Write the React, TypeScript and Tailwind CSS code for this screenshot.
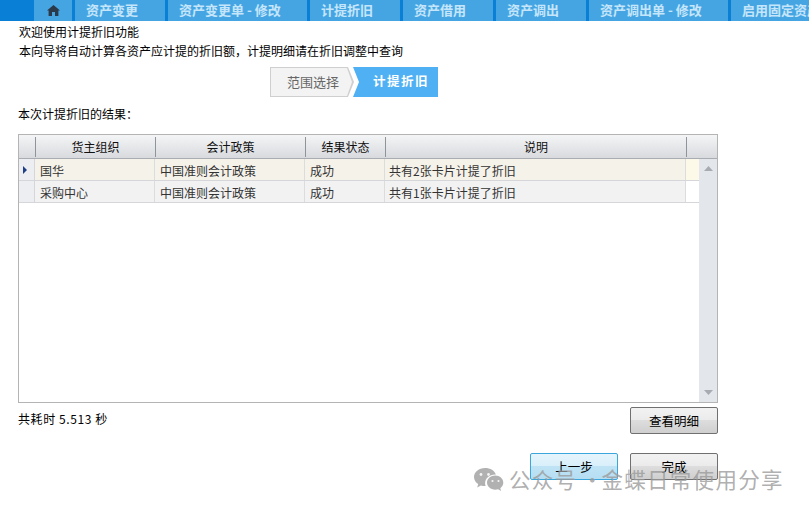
const font = { fontFamily: '"Noto Sans CJK SC", sans-serif' }

const tabs = [
  { label: '资产变更', w: 'w-[90px]' },
  { label: '资产变更单 - 修改', w: 'w-[139px]' },
  { label: '计提折旧', w: 'w-[90px]' },
  { label: '资产借用', w: 'w-[90px]' },
  { label: '资产调出', w: 'w-[90px]' },
  { label: '资产调出单 - 修改', w: 'w-[139px]' },
  { label: '启用固定资产', w: 'w-[78px]' },
]

const rows = [
  { org: '国华', policy: '中国准则会计政策', status: '成功', note: '共有2张卡片计提了折旧', active: true },
  { org: '采购中心', policy: '中国准则会计政策', status: '成功', note: '共有1张卡片计提了折旧', active: false },
]

function GridButton({ label, focus }: { label: string; focus?: boolean }) {
  return (
    <button
      className={
        'w-[88px] h-[27px] pt-[1px] rounded-[2px] border text-[12.5px] text-black ' +
        (focus
          ? 'border-[#3aa6dc] bg-[linear-gradient(#e6f5fd_0%,#d8effa_48%,#bfe3f5_50%,#b5def3_100%)]'
          : 'border-[#707070] bg-[linear-gradient(#f2f2f2_0%,#ebebeb_48%,#dddddd_50%,#cfcfcf_100%)]')
      }
    >
      {label}
    </button>
  )
}

export default function App() {
  return (
    <div style={font} className="relative w-[809px] h-[511px] overflow-hidden bg-white text-[12px] text-black">
      {/* top tabs */}
      <div className="flex h-[21px] bg-[#0a7fd6] pl-[34px] gap-[3px] overflow-hidden">
        <div className="w-[38px] shrink-0 bg-[#45a5e3] flex items-center justify-center">
          <svg width="13" height="11" viewBox="0 0 13 11" fill="#2b3a4a">
            <path d="M6.5 0 L13 5.6 L11.4 5.6 L11.4 11 L8 11 L8 7 L5 7 L5 11 L1.6 11 L1.6 5.6 L0 5.6 Z" />
          </svg>
        </div>
        {tabs.map((t) => (
          <div
            key={t.label}
            className={t.w + ' shrink-0 bg-[#45a5e3] pl-[11px] text-[13px] font-bold leading-[20px] text-[#c5e6fa] whitespace-nowrap overflow-hidden'}
          >
            {t.label}
          </div>
        ))}
      </div>

      {/* intro */}
      <div className="pl-[19px] pt-[1px] leading-[19px]">
        <p>欢迎使用计提折旧功能</p>
        <p>本向导将自动计算各资产应计提的折旧额，计提明细请在折旧调整中查询</p>
      </div>

      {/* steps */}
      <div className="flex pl-[270px] mt-[7px] h-[30px]">
        <div className="w-[84px] h-full bg-[#cfcfcf] [clip-path:polygon(0_0,78px_0,84px_15px,78px_100%,0_100%)]">
          <div className="m-[1px] w-[81px] h-[28px] bg-[#f3f3f3] text-[#666] text-[13px] leading-[27px] pl-[16px] [clip-path:polygon(0_0,76px_0,81px_14px,76px_100%,0_100%)]">
            范围选择
          </div>
        </div>
        <div className="w-[85px] -ml-[1px] h-full bg-[#4fb1f3] text-white font-bold text-[12.5px] leading-[28px] pl-[20px] tracking-[1.5px] [clip-path:polygon(0_0,100%_0,100%_100%,0_100%,6px_15px)]">
          计提折旧
        </div>
      </div>

      <p className="pl-[18px] mt-[7px] leading-[20px]">本次计提折旧的结果：</p>

      {/* grid */}
      <div className="ml-[18px] mt-[10px] w-[700px] h-[269px] border border-[#b4b4b4] flex flex-col">
        <div className="flex h-[24px] shrink-0 border-b border-[#a9adb3] bg-[linear-gradient(#f4f5f6,#d8dade)] items-center text-center text-[#111]">
          <div className="w-[16px]" />
          <div className="w-[120px] h-[20px] leading-[20px] border-l border-[#8f949a]">货主组织</div>
          <div className="w-[150px] h-[20px] leading-[20px] border-l border-[#8f949a]">会计政策</div>
          <div className="w-[80px] h-[20px] leading-[20px] border-l border-[#8f949a]">结果状态</div>
          <div className="w-[301px] h-[20px] leading-[20px] border-l border-[#8f949a]">说明</div>
          <div className="flex-1 h-[20px] border-l border-[#8f949a]" />
        </div>
        <div className="flex flex-1 min-h-0">
          <div className="flex-1">
            {rows.map((r) => (
              <div key={r.org} className="flex h-[22px] border-b border-[#d4d6d9] leading-[23px] text-[#333]">
                <div className="w-[16px] flex items-center justify-center bg-[#eceef1] border-r border-[#d4d6d9]">
                  {r.active && (
                    <svg width="4" height="8" viewBox="0 0 4 8" className="ml-[-3px]">
                      <path d="M0 0 L4 4 L0 8 Z" fill="#1f3f86" />
                    </svg>
                  )}
                </div>
                <div className={'w-[120px] pl-[5px] border-r border-[#dcdcdc] ' + (r.active ? 'bg-[#f5f2ea]' : 'bg-[#f2f2f2]')}>{r.org}</div>
                <div className={'w-[150px] pl-[5px] border-r border-[#dcdcdc] ' + (r.active ? 'bg-[#f5f2ea]' : 'bg-[#f2f2f2]')}>{r.policy}</div>
                <div className={'w-[80px] pl-[5px] border-r border-[#dcdcdc] ' + (r.active ? 'bg-[#f5f2ea]' : 'bg-[#f2f2f2]')}>{r.status}</div>
                <div className={'w-[301px] pl-[4px] border-r border-[#dcdcdc] ' + (r.active ? 'bg-[#f5f2ea]' : 'bg-[#f2f2f2]')}>{r.note}</div>
                <div className={'flex-1 ' + (r.active ? 'bg-[#fdf9e8]' : 'bg-white')} />
              </div>
            ))}
          </div>
          <div className="w-[18px] shrink-0 bg-[#e3e6ea] flex flex-col justify-between items-center py-[7px]">
            <svg width="9" height="5" viewBox="0 0 9 5"><path d="M0 5 L4.5 0 L9 5 Z" fill="#a8acb2" /></svg>
            <svg width="9" height="5" viewBox="0 0 9 5"><path d="M0 0 L4.5 5 L9 0 Z" fill="#a8acb2" /></svg>
          </div>
        </div>
      </div>

      {/* footer */}
      <div className="flex justify-between items-start pl-[18px] w-[718px] mt-[4px]">
        <span className="mt-[3px] leading-[18px] tracking-[0.6px]">共耗时 5.513 秒</span>
        <GridButton label="查看明细" />
      </div>
      <div className="flex justify-end gap-[12px] w-[718px] mt-[19px]">
        <GridButton label="上一步" focus />
        <GridButton label="完成" />
      </div>

      {/* watermark */}
      <div className="absolute left-[473px] top-[465px] flex items-center gap-[5px] text-[#9a9a9a]/80 text-[21.5px] tracking-[1.3px] leading-[28px] whitespace-nowrap">
        <svg width="31" height="25" viewBox="0 0 31 25" fill="#a3a3a3" fillOpacity="0.85">
          <path d="M12 1C5.9 1 1 5 1 10c0 2.9 1.6 5.4 4.2 7.1L4.2 20.400l3.700-1.900c1.300.4 2.700.6 4.100.6h.6c-.3-.9-.5-1.800-.5-2.800 0-4.900 4.500-8.700 10.100-8.700h.7C21.800 3.600 17.300 1 12 1z" />
          <path d="M22.300 8.500c-4.600 0-8.300 3.200-8.300 7.100s3.700 7.100 8.300 7.100c1 0 1.900-.1 2.800-.4l3 1.700-.8-2.800c1.800-1.300 3-3.300 3-5.600 0-3.900-3.500-7.100-8-7.100z" />
          <circle cx="8" cy="7.500" r="1.400" fill="#fff" />
          <circle cx="15.500" cy="7.500" r="1.400" fill="#fff" />
          <circle cx="19.500" cy="14" r="1.100" fill="#fff" />
          <circle cx="25.500" cy="14" r="1.100" fill="#fff" />
        </svg>
        <span>公众号</span>
        <span className="w-[16px] text-center -mx-[1px] tracking-normal">·</span>
        <span>金蝶日常使用分享</span>
      </div>
    </div>
  )
}
